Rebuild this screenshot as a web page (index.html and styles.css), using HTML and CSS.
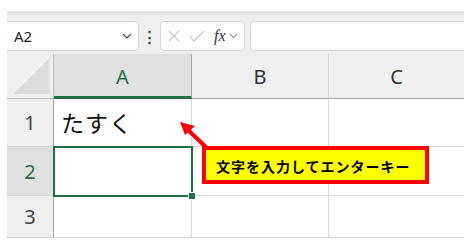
FILE: index.html
```html
<!DOCTYPE html>
<html lang="ja">
<head>
  <meta charset="UTF-8" />
  <title>Excel - 入力</title>
  <link rel="stylesheet" href="styles.css">
</head>
<body>

<div class="sheet">
  <!-- Formula bar -->
  <div class="toolbar">
    <div class="namebox">
      <span>A2</span>
      <svg class="chev" width="10" height="6" viewBox="0 0 10 6"><path d="M1 1l4 4 4-4" fill="none" stroke="#444" stroke-width="1.2"/></svg>
    </div>
    <div class="dots">⋮</div>
    <div class="fxgroup">
      <svg width="14" height="14" viewBox="0 0 14 14"><path d="M2 2l10 10M12 2L2 12" stroke="#c8c8c8" stroke-width="1.2"/></svg>
      <svg width="16" height="14" viewBox="0 0 16 14"><path d="M1 7l4 5 10-10" fill="none" stroke="#c8c8c8" stroke-width="1.2"/></svg>
      <span class="fx">fx</span>
      <svg width="9" height="6" viewBox="0 0 9 6"><path d="M1 1l3.5 3.5L8 1" fill="none" stroke="#999" stroke-width="1.1"/></svg>
    </div>
    <div class="formula"></div>
  </div>

  <!-- Grid -->
  <div class="grid">
    <div class="corner"><div class="tri"></div></div>
    <div class="colhead active">A</div>
    <div class="colhead">B</div>
    <div class="colhead last">C</div>

    <div class="rowhead">1</div>
    <div class="cell text">たすく</div>
    <div class="cell"></div>
    <div class="cell last"></div>

    <div class="rowhead active">2</div>
    <div class="cell selected"></div>
    <div class="cell"></div>
    <div class="cell last"></div>

    <div class="rowhead">3</div>
    <div class="cell"></div>
    <div class="cell"></div>
    <div class="cell last"></div>
  </div>

  <!-- Annotation -->
  <svg class="arrow" width="40" height="34" viewBox="0 0 40 34">
    <path d="M32 30L10 9" stroke="#ff0000" stroke-width="4" stroke-linecap="round"/>
    <path d="M2 1l15 4-10 9z" fill="#ff0000"/>
  </svg>
  <div class="callout">文字を入力してエンターキー</div>
</div>

</body>
</html>
```

FILE: styles.css
```css
* {
  margin: 0; padding: 0; box-sizing: border-box;
}

body {
  background: #ffffff;
  font-family: 'Noto Sans', 'Noto Sans CJK JP', sans-serif;
}

.sheet {
  position: relative;
  width: 457px;
  margin: 11px 0 0 7px;
  height: 227px;
  background: #efefef;
  overflow: hidden;
}

/* formula bar */
.toolbar {
  display: flex;
  align-items: center;
  height: 43px;
  padding-top: 2px;
  border-top: 4px solid #e6e6e6;
}

.namebox {
  width: 132px;
  height: 30px;
  background: #fff;
  border: 1px solid #d6d6d6;
  border-left: none;
  border-radius: 0 5px 5px 0;
  display: flex;
  align-items: center;
  justify-content: space-between;
  padding: 0 6px 0 7px;
  font-size: 15px;
  color: #222;
}

.dots {
  width: 21px;
  text-align: center;
  font-size: 15px;
  font-weight: bold;
  color: #444;
}

.fxgroup {
  width: 85px;
  height: 30px;
  background: #fff;
  border: 1px solid #d6d6d6;
  border-radius: 5px;
  display: flex;
  align-items: center;
  gap: 8px;
  padding-left: 6px;
}

.fx {
  font-family: 'Liberation Serif', serif;
  font-style: italic;
  font-size: 16px;
  color: #333;
  margin-left: 1px;
  margin-right: -5px;
}

.formula {
  flex: 1;
  height: 30px;
  margin-left: 5px;
  background: #fff;
  border: 1px solid #d6d6d6;
  border-right: none;
  border-radius: 5px 0 0 5px;
}

/* grid */
.grid {
  display: grid;
  grid-template-columns: 47px 138px 137px 135px;
  grid-template-rows: 45px 48px 49px 42px;
}

.corner {
  border-right: 1px solid #bdbdbd;
  border-bottom: 1px solid #bdbdbd;
  display: flex;
  align-items: flex-end;
  justify-content: flex-end;
  padding: 0 4px 4px 0;
}

.tri {
  width: 36px;
  height: 36px;
  background: linear-gradient(to bottom right, transparent 50%, #dcdcdc 50%);
}

.colhead {
  border-right: 1px solid #d4d4d4;
  border-bottom: 1px solid #a8a8a8;
  display: flex;
  align-items: center;
  justify-content: center;
  font-size: 20px;
  color: #333;
}

.colhead.active {
  background: #e0e0e0;
  color: #1e6f43;
  border-right-color: #a8a8a8;
  border-bottom: 3px solid #1e6f43;
  padding-top: 2px;
}

.colhead.last, .cell.last { border-right: none; }

.rowhead {
  border-right: 1px solid #a8a8a8;
  border-bottom: 1px solid #d4d4d4;
  display: flex;
  align-items: center;
  justify-content: center;
  font-size: 20px;
  color: #444;
}

.rowhead.active {
  background: #e0e0e0;
  color: #1e6f43;
}

.cell {
  background: #fff;
  border-right: 1px solid #dadada;
  border-bottom: 1px solid #dadada;
}

.cell.text {
  font-family: 'Noto Sans CJK JP', sans-serif;
  font-size: 23px;
  color: #111;
  padding: 6px 0 0 7px;
  letter-spacing: 1px;
}

.cell.selected {
  position: relative;
  border: none;
}

.cell.selected::after {
  content: "";
  position: absolute;
  left: -1px; top: -1px; right: -1px; bottom: -1px;
  border: 2px solid #1e6f43;
}

.cell.selected::before {
  content: "";
  position: absolute;
  right: -4px; bottom: -4px;
  width: 6px; height: 6px;
  background: #1e6f43;
  border: 1px solid #fff;
  z-index: 2;
}

/* annotation */
.arrow {
  position: absolute;
  left: 171px;
  top: 110px;
}

.callout {
  position: absolute;
  left: 195px;
  top: 135px;
  width: 227px;
  height: 38px;
  background: #ffff00;
  border: 4px solid #ff0000;
  font-family: 'Noto Sans CJK JP', sans-serif;
  font-weight: bold;
  font-size: 14px;
  color: #000;
  padding: 6px 0 0 10px;
  letter-spacing: 1px;
}
```
